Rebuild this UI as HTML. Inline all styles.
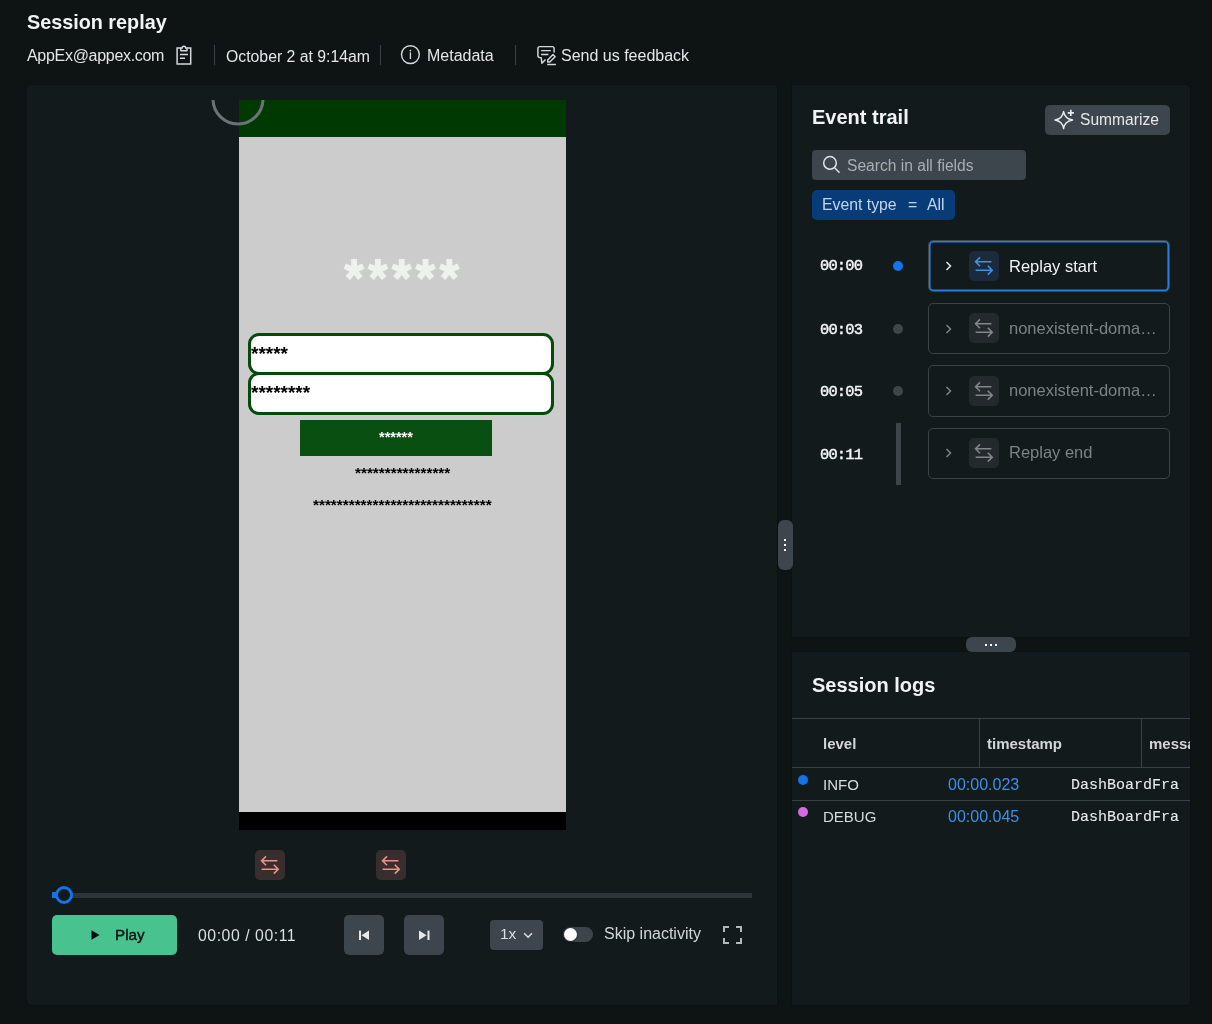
<!DOCTYPE html>
<html><head><meta charset="utf-8">
<style>
*{box-sizing:border-box;margin:0;padding:0}
html,body{width:1212px;height:1024px;overflow:hidden;background:#0e1313;font-family:"Liberation Sans",sans-serif}
.a{position:absolute}
.t{position:absolute;white-space:pre;line-height:1;will-change:transform}
.m{font-family:"Liberation Mono",monospace}
.panel{position:absolute;background:#131a1b;border-radius:4px;box-shadow:0 0 0 1px #0c1011}
.sep{position:absolute;width:1px;background:#394146;top:45px;height:20px}
.btn{position:absolute;background:#3c464c;border-radius:5px}
svg{position:absolute;overflow:visible}
</style></head><body>

<!-- header -->
<div class="t" style="left:27px;top:13px;font-size:19.8px;font-weight:700;color:#f2f3f4">Session replay</div>
<div class="t" style="left:27px;top:47.5px;font-size:16px;letter-spacing:-0.3px;color:#e4e6e8">AppEx@appex.com</div>
<svg style="left:176px;top:45px" width="17" height="21" viewBox="0 0 17 21"><g fill="none" stroke="#d6d9db" stroke-width="1.5"><path d="M4.6 3.1H1.1V19.1H14.7V3.1H11.2"/><path d="M4.8 3.1h1.3a1.8 1.8 0 0 1 3.6 0h1.3v2.3a0.4 0.4 0 0 1-0.4 0.4h-5.4a0.4 0.4 0 0 1-0.4-0.4z"/><path d="M4 9.4h8M4 13.2h5"/></g></svg>
<div class="sep" style="left:214px"></div>
<div class="t" style="left:226px;top:48.5px;font-size:15.8px;color:#e4e6e8">October 2 at 9:14am</div>
<div class="sep" style="left:380px"></div>
<svg style="left:400px;top:45px" width="20" height="20" viewBox="0 0 20 20"><g fill="none" stroke="#d6d9db" stroke-width="1.4"><circle cx="10.4" cy="9.6" r="8.9"/><path d="M10.4 7.3v6.8" stroke-width="1.3"/></g><circle cx="10.4" cy="5.6" r="0.85" fill="#d6d9db"/></svg>
<div class="t" style="left:427px;top:47.5px;font-size:16px;color:#e4e6e8">Metadata</div>
<div class="sep" style="left:515px"></div>
<svg style="left:532px;top:40px" width="30" height="30" viewBox="0 0 30 30"><g fill="none" stroke="#d6d9db" stroke-width="1.45" stroke-linejoin="round"><path d="M22.1 12.6V8.6a2 2 0 0 0-2-2H7.9a2 2 0 0 0-2 2V15.6a2 2 0 0 0 2 2H9.2L9.9 23.2 13.5 19.4"/><path d="M9.1 10.6h9.7M9.1 14.4h7.3"/><path d="M15.7 21.9V19.9L21 14.6 23.1 16.7 17.8 21.9Z"/><path d="M15.2 24.5h8.7"/></g></svg>
<div class="t" style="left:561px;top:47.5px;font-size:16px;color:#e4e6e8">Send us feedback</div>

<!-- left panel -->
<div class="panel" style="left:27px;top:85px;width:750px;height:920px;border-radius:4px 0 0 4px"></div>
<!-- phone frame -->
<div class="a" style="left:239px;top:100px;width:327px;height:730px;background:#cccccc;overflow:hidden">
  <div class="a" style="left:0;top:0;width:327px;height:37px;background:#003a02"></div>
  <div class="a" style="left:0;top:712px;width:327px;height:18px;background:#000"></div>
  <svg style="left:0;top:0" width="327" height="300" viewBox="0 0 327 300"><g fill="#eef1ee"><g transform="translate(115.1 170.4)"><rect x="-2.95" y="-11.4" width="5.9" height="12" transform="rotate(0)"/><rect x="-2.95" y="-10.2" width="5.9" height="11" transform="rotate(-65.6)"/><rect x="-2.95" y="-10.2" width="5.9" height="11" transform="rotate(65.6)"/><rect x="-2.95" y="-10" width="5.9" height="11" transform="rotate(-141)"/><rect x="-2.95" y="-10" width="5.9" height="11" transform="rotate(141)"/></g><g transform="translate(138.9 170.4)"><rect x="-2.95" y="-11.4" width="5.9" height="12" transform="rotate(0)"/><rect x="-2.95" y="-10.2" width="5.9" height="11" transform="rotate(-65.6)"/><rect x="-2.95" y="-10.2" width="5.9" height="11" transform="rotate(65.6)"/><rect x="-2.95" y="-10" width="5.9" height="11" transform="rotate(-141)"/><rect x="-2.95" y="-10" width="5.9" height="11" transform="rotate(141)"/></g><g transform="translate(162.7 170.4)"><rect x="-2.95" y="-11.4" width="5.9" height="12" transform="rotate(0)"/><rect x="-2.95" y="-10.2" width="5.9" height="11" transform="rotate(-65.6)"/><rect x="-2.95" y="-10.2" width="5.9" height="11" transform="rotate(65.6)"/><rect x="-2.95" y="-10" width="5.9" height="11" transform="rotate(-141)"/><rect x="-2.95" y="-10" width="5.9" height="11" transform="rotate(141)"/></g><g transform="translate(186.5 170.4)"><rect x="-2.95" y="-11.4" width="5.9" height="12" transform="rotate(0)"/><rect x="-2.95" y="-10.2" width="5.9" height="11" transform="rotate(-65.6)"/><rect x="-2.95" y="-10.2" width="5.9" height="11" transform="rotate(65.6)"/><rect x="-2.95" y="-10" width="5.9" height="11" transform="rotate(-141)"/><rect x="-2.95" y="-10" width="5.9" height="11" transform="rotate(141)"/></g><g transform="translate(210.3 170.4)"><rect x="-2.95" y="-11.4" width="5.9" height="12" transform="rotate(0)"/><rect x="-2.95" y="-10.2" width="5.9" height="11" transform="rotate(-65.6)"/><rect x="-2.95" y="-10.2" width="5.9" height="11" transform="rotate(65.6)"/><rect x="-2.95" y="-10" width="5.9" height="11" transform="rotate(-141)"/><rect x="-2.95" y="-10" width="5.9" height="11" transform="rotate(141)"/></g></g></svg>
  <div class="a" style="left:8.5px;top:233px;width:306px;height:42px;border:3.6px solid #044a0a;border-radius:11px;background:#fff"></div>
  <div class="a" style="left:8.5px;top:272px;width:306px;height:43px;border:3.6px solid #044a0a;border-radius:11px;background:#fff"></div>
  <div class="t" style="left:12px;top:244px;font-size:19px;font-weight:700;color:#000">*****</div>
  <div class="t" style="left:12px;top:283px;font-size:19px;font-weight:700;color:#000">********</div>
  <div class="a" style="left:61px;top:319.5px;width:192px;height:36.5px;background:#0a4f12"></div>
  <div class="t" style="left:140px;top:330px;font-size:14.5px;font-weight:700;color:#fff">******</div>
  <div class="t" style="left:115.5px;top:365px;font-size:15.3px;font-weight:700;color:#000">****************</div>
  <div class="t" style="left:73.5px;top:397px;font-size:15.3px;font-weight:700;color:#000">******************************</div>
</div>

<!-- replay clip area -->
<div class="a" style="left:27px;top:100px;width:750px;height:740px;overflow:hidden">
  <svg style="left:183.5px;top:-28px" width="54" height="54" viewBox="0 0 54 54"><circle cx="27" cy="27" r="25" fill="none" stroke="#6b7278" stroke-width="3"/></svg>
</div>
<!-- event markers -->
<div class="a" style="left:255px;top:850px;width:30px;height:30px;background:#392e2e;border-radius:5px"></div>
<div class="a" style="left:376px;top:850px;width:30px;height:30px;background:#392e2e;border-radius:5px"></div>
<svg style="left:255px;top:850px" width="30" height="30" viewBox="0 0 30 30"><g fill="none" stroke="#e8948d" stroke-width="1.6"><path d="M6.6 10.8h15.8M11 6.4l-4.4 4.4 4.4 4.4M6.6 19.2h16.6M18.8 14.8l4.4 4.4-4.4 4.4"/></g></svg>
<svg style="left:376px;top:850px" width="30" height="30" viewBox="0 0 30 30"><g fill="none" stroke="#e8948d" stroke-width="1.6"><path d="M6.6 10.8h15.8M11 6.4l-4.4 4.4 4.4 4.4M6.6 19.2h16.6M18.8 14.8l4.4 4.4-4.4 4.4"/></g></svg>

<!-- scrubber -->
<div class="a" style="left:56px;top:892.5px;width:696px;height:5px;background:#2c353a;border-radius:0"></div>
<div class="a" style="left:52px;top:892px;width:5px;height:6px;background:#1473e6"></div>
<div class="a" style="left:55px;top:886px;width:18px;height:18px;border:3px solid #1473e6;border-radius:50%;background:#131a1b"></div>

<!-- controls -->
<div class="a" style="left:52px;top:915px;width:125px;height:40px;background:#48c28e;border-radius:5px"></div>
<svg style="left:91px;top:930px" width="9" height="10" viewBox="0 0 9 10"><path d="M0.5 0.2L8.5 5 0.5 9.8z" fill="#0a0c0d"/></svg>
<div class="t" style="left:114.5px;top:926.5px;font-size:15.2px;font-weight:400;color:#0a0d0e;-webkit-text-stroke:0.35px #0a0d0e">Play</div>
<div class="t" style="left:197.5px;top:928px;font-size:15.8px;letter-spacing:0.55px;color:#dcdfe1">00:00 / 00:11</div>
<div class="btn" style="left:344px;top:915px;width:40px;height:40px"></div>
<div class="btn" style="left:404px;top:915px;width:40px;height:40px"></div>
<svg style="left:344px;top:915px" width="40" height="40" viewBox="0 0 40 40"><g fill="#e6e8e9"><rect x="15" y="15.6" width="2" height="9.4"/><path d="M25 15.6v9.4l-7.5-4.7z"/></g></svg>
<svg style="left:404px;top:915px" width="40" height="40" viewBox="0 0 40 40"><g fill="#e6e8e9"><rect x="23.5" y="15.6" width="2" height="9.4"/><path d="M15 15.6v9.4l7.5-4.7z"/></g></svg>
<div class="btn" style="left:490px;top:920px;width:53px;height:30px;border-radius:4px"></div>
<div class="t" style="left:500px;top:926px;font-size:15.5px;color:#dcdfe1">1x</div>
<svg style="left:522px;top:930.5px" width="12" height="8" viewBox="0 0 12 8"><path d="M2.2 2.3l3.9 3.9 3.9-3.9" fill="none" stroke="#e0e2e4" stroke-width="1.4"/></svg>
<div class="a" style="left:563px;top:927px;width:30px;height:15px;background:#3b454b;border-radius:8px"></div>
<div class="a" style="left:564.3px;top:928px;width:13px;height:13px;background:#fff;border-radius:50%;box-shadow:0 1px 2px rgba(0,0,0,.5)"></div>
<div class="t" style="left:604px;top:926px;font-size:16px;color:#d3d6d8">Skip inactivity</div>
<svg style="left:723px;top:926px" width="19" height="18" viewBox="0 0 19 18"><g fill="none" stroke="#b4b8ba" stroke-width="2"><path d="M1 6V1h5M13 1h5v5M18 12v5h-5M6 17H1v-5"/></g></svg>

<!-- right panels -->
<div class="panel" style="left:792px;top:85px;width:398px;height:552px;border-radius:0 4px 0 0"></div>
<div class="panel" style="left:792px;top:652px;width:398px;height:353px;border-radius:0 0 4px 0"></div>
<!-- splitter handles -->
<div class="a" style="left:777.5px;top:520px;width:15px;height:50px;background:#3c464c;border-radius:6px"></div>
<div class="a" style="left:784px;top:539px;width:2px;height:2px;background:#fff"></div>
<div class="a" style="left:784px;top:544px;width:2px;height:2px;background:#fff"></div>
<div class="a" style="left:784px;top:549px;width:2px;height:2px;background:#fff"></div>
<div class="a" style="left:966px;top:637px;width:50px;height:15px;background:#3c464c;border-radius:6px"></div>
<div class="a" style="left:985px;top:644px;width:2px;height:2px;background:#fff"></div>
<div class="a" style="left:990px;top:644px;width:2px;height:2px;background:#fff"></div>
<div class="a" style="left:995px;top:644px;width:2px;height:2px;background:#fff"></div>

<!-- event trail -->
<div class="t" style="left:812px;top:107px;font-size:20px;font-weight:700;color:#f2f3f4">Event trail</div>
<div class="btn" style="left:1045px;top:105px;width:125px;height:30px;border-radius:5px"></div>
<svg style="left:1050px;top:105px" width="30" height="30" viewBox="0 0 30 30"><g fill="none" stroke="#e9ebec" stroke-width="1.4" stroke-linejoin="round"><path d="M13.6 6.4Q14.7 13.9 22.6 15Q14.7 16.1 13.6 23.6Q12.5 16.1 5 15Q12.5 13.9 13.6 6.4Z"/><path d="M20.8 4.8v6.2M17.7 7.9h6.2" stroke-width="1.7"/></g></svg>
<div class="t" style="left:1080px;top:112px;font-size:15.6px;color:#e6e8e9">Summarize</div>
<div class="btn" style="left:812px;top:150px;width:214px;height:30px;border-radius:4px"></div>
<svg style="left:822px;top:155px" width="20" height="20" viewBox="0 0 20 20"><g fill="none" stroke="#e2e4e6" stroke-width="1.5" stroke-linecap="round"><circle cx="8" cy="7.9" r="6.3"/><path d="M13.1 13.3l4 3.9"/></g></svg>
<div class="t" style="left:847px;top:158px;font-size:15.6px;color:#a9aeb1">Search in all fields</div>
<div class="a" style="left:812px;top:190px;width:143px;height:30px;background:#083c78;border-radius:5px"></div>
<div class="t" style="left:822px;top:197px;font-size:15.8px;color:#c0d6f0">Event type</div><div class="t" style="left:908px;top:197px;font-size:15.8px;color:#c0d6f0">=</div><div class="t" style="left:927px;top:197px;font-size:15.8px;color:#c0d6f0">All</div>

<!-- rows -->
<div class="t m" style="left:820px;top:259px;font-size:15.4px;font-weight:400;color:#f2f3f4;-webkit-text-stroke:0.5px #f2f3f4;letter-spacing:-0.8px">00:00</div>
<div class="a" style="left:893px;top:261px;width:10px;height:10px;border-radius:50%;background:#1473e6"></div>
<div class="a" style="left:928px;top:240px;width:242px;height:52px;border:1px solid #3e474c;box-shadow:inset 0 0 0 1.6px #2a7ce0;border-radius:5px"></div>
<svg style="left:945px;top:261px" width="8" height="10" viewBox="0 0 8 10"><path d="M1.5 1l4 4-4 4" fill="none" stroke="#e6e8e9" stroke-width="1.5"/></svg>
<div class="a" style="left:969px;top:251px;width:30px;height:30px;background:#1b2b3b;border-radius:5px"></div>
<svg style="left:969px;top:251px" width="30" height="30" viewBox="0 0 30 30"><g fill="none" stroke="#3d93ec" stroke-width="1.6"><path d="M6.6 10.8h15.8M11 6.4l-4.4 4.4 4.4 4.4M6.6 19.2h16.6M18.8 14.8l4.4 4.4-4.4 4.4"/></g></svg>
<div class="t" style="left:1009px;top:257.5px;font-size:16.5px;color:#f2f3f4">Replay start</div>

<div class="t m" style="left:820px;top:322.5px;font-size:15.4px;font-weight:400;color:#f2f3f4;-webkit-text-stroke:0.5px #f2f3f4;letter-spacing:-0.8px">00:03</div>
<div class="a" style="left:893px;top:324px;width:10px;height:10px;border-radius:50%;background:#3d464b"></div>
<div class="a" style="left:928px;top:303px;width:242px;height:51px;border:1px solid #3b4348;border-radius:5px"></div>
<svg style="left:945px;top:324px" width="8" height="10" viewBox="0 0 8 10"><path d="M1.5 1l4 4-4 4" fill="none" stroke="#7d8387" stroke-width="1.5"/></svg>
<div class="a" style="left:969px;top:313px;width:30px;height:30px;background:#23292c;border-radius:5px"></div>
<svg style="left:969px;top:313px" width="30" height="30" viewBox="0 0 30 30"><g fill="none" stroke="#80868a" stroke-width="1.6"><path d="M6.6 10.8h15.8M11 6.4l-4.4 4.4 4.4 4.4M6.6 19.2h16.6M18.8 14.8l4.4 4.4-4.4 4.4"/></g></svg>
<div class="t" style="left:1009px;top:320px;font-size:16.5px;color:#7c8286">nonexistent-doma…</div>

<div class="t m" style="left:820px;top:384.5px;font-size:15.4px;font-weight:400;color:#f2f3f4;-webkit-text-stroke:0.5px #f2f3f4;letter-spacing:-0.8px">00:05</div>
<div class="a" style="left:893px;top:386px;width:10px;height:10px;border-radius:50%;background:#3d464b"></div>
<div class="a" style="left:928px;top:365px;width:242px;height:52px;border:1px solid #3b4348;border-radius:5px"></div>
<svg style="left:945px;top:386px" width="8" height="10" viewBox="0 0 8 10"><path d="M1.5 1l4 4-4 4" fill="none" stroke="#7d8387" stroke-width="1.5"/></svg>
<div class="a" style="left:969px;top:376px;width:30px;height:30px;background:#23292c;border-radius:5px"></div>
<svg style="left:969px;top:376px" width="30" height="30" viewBox="0 0 30 30"><g fill="none" stroke="#80868a" stroke-width="1.6"><path d="M6.6 10.8h15.8M11 6.4l-4.4 4.4 4.4 4.4M6.6 19.2h16.6M18.8 14.8l4.4 4.4-4.4 4.4"/></g></svg>
<div class="t" style="left:1009px;top:382px;font-size:16.5px;color:#7c8286">nonexistent-doma…</div>

<div class="t m" style="left:820px;top:447.5px;font-size:15.4px;font-weight:400;color:#f2f3f4;-webkit-text-stroke:0.5px #f2f3f4;letter-spacing:-0.8px">00:11</div>
<div class="a" style="left:896px;top:423px;width:5px;height:62px;background:#3d464b"></div>
<div class="a" style="left:928px;top:428px;width:242px;height:51px;border:1px solid #3b4348;border-radius:5px"></div>
<svg style="left:945px;top:448px" width="8" height="10" viewBox="0 0 8 10"><path d="M1.5 1l4 4-4 4" fill="none" stroke="#7d8387" stroke-width="1.5"/></svg>
<div class="a" style="left:969px;top:438px;width:30px;height:30px;background:#23292c;border-radius:5px"></div>
<svg style="left:969px;top:438px" width="30" height="30" viewBox="0 0 30 30"><g fill="none" stroke="#80868a" stroke-width="1.6"><path d="M6.6 10.8h15.8M11 6.4l-4.4 4.4 4.4 4.4M6.6 19.2h16.6M18.8 14.8l4.4 4.4-4.4 4.4"/></g></svg>
<div class="t" style="left:1009px;top:444px;font-size:16.5px;color:#7c8286">Replay end</div>

<!-- session logs -->
<div class="t" style="left:812px;top:674.5px;font-size:20px;font-weight:700;color:#f2f3f4">Session logs</div>
<div class="a" style="left:792px;top:718px;width:398px;height:1px;background:#3a4246"></div>
<div class="a" style="left:792px;top:766.5px;width:398px;height:1px;background:#3a4246"></div>
<div class="a" style="left:792px;top:799.5px;width:398px;height:1px;background:#3a4246"></div>
<div class="a" style="left:979px;top:718px;width:1px;height:49px;background:#3a4246"></div>
<div class="a" style="left:1141px;top:718px;width:1px;height:49px;background:#3a4246"></div>
<div class="a" style="left:792px;top:719px;width:398px;height:120px;overflow:hidden">
  <div class="t" style="left:31px;top:16.5px;font-size:15px;font-weight:700;color:#d3d6d8">level</div>
  <div class="t" style="left:195px;top:16.5px;font-size:15px;font-weight:700;color:#d3d6d8">timestamp</div>
  <div class="t" style="left:356.5px;top:16.5px;font-size:15px;font-weight:700;color:#d3d6d8">message</div>
</div>
<div class="a" style="left:798px;top:775px;width:10px;height:10px;border-radius:50%;background:#1473e6"></div>
<div class="a" style="left:798px;top:807px;width:10px;height:10px;border-radius:50%;background:#d46be0"></div>
<div class="t" style="left:823px;top:776.5px;font-size:15px;color:#d8dbdd">INFO</div>
<div class="t" style="left:823px;top:809px;font-size:15px;color:#d8dbdd">DEBUG</div>
<div class="t" style="left:948px;top:777px;font-size:16px;letter-spacing:0px;color:#3d91e6">00:00.023</div>
<div class="t" style="left:948px;top:809px;font-size:16px;color:#3d91e6">00:00.045</div>
<div class="t m" style="left:1071px;top:778px;font-size:15px;color:#e8eaeb;-webkit-text-stroke:0.1px #e8eaeb">DashBoardFra</div>
<div class="t m" style="left:1071px;top:809.5px;font-size:15px;color:#e8eaeb;-webkit-text-stroke:0.1px #e8eaeb">DashBoardFra</div>

</body></html>
